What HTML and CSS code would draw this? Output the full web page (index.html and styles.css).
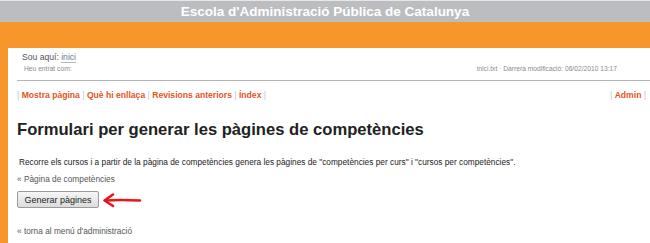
FILE: index.html
```html
<!DOCTYPE html>
<html lang="ca">
<head>
<meta charset="utf-8">
<title>Escola d'Administració Pública de Catalunya</title>
<link rel="stylesheet" href="styles.css">
</head>
<body>
<div class="site-title">Escola d'Administració Pública de Catalunya</div>
<div class="orange-bar"></div>
<div class="frame">
  <div class="content">
    <div class="meta">
      <div class="crumbs">Sou aquí: <a class="crumb-link" href="#">inici</a></div>
      <div class="meta-row">
        <span class="user">Heu entrat com:</span>
        <span class="modified">inici.txt · Darrera modificació: 06/02/2010 13:17</span>
      </div>
    </div>
    <div class="actions">
      <div class="action-group"><span class="pipe">|</span> <a href="#">Mostra pàgina</a> <span class="pipe">|</span> <a href="#">Què hi enllaça</a> <span class="pipe">|</span> <a href="#">Revisions anteriors</a> <span class="pipe">|</span> <a href="#">Índex</a> <span class="pipe">|</span></div>
      <div class="action-group"><span class="pipe">|</span> <a href="#">Admin</a> <span class="pipe">|</span></div>
    </div>
    <h1 class="page-title">Formulari per generar les pàgines de competències</h1>
    <p class="intro">Recorre els cursos i a partir de la pàgina de competències genera les pàgines de "competències per curs" i "cursos per competències".</p>
    <p class="back">« Pàgina de competències</p>
    <div class="form-row">
      <button class="btn" type="button">Generar pàgines</button>
      <svg class="arrow" width="42" height="16" viewBox="0 0 42 16">
        <path d="M40 8.5 C30 8 18 7.5 6 8.5" fill="none" stroke="#e8151b" stroke-width="2.6" stroke-linecap="round"/>
        <path d="M13 2.5 L4.5 8.5 L13 14" fill="none" stroke="#e8151b" stroke-width="2.6" stroke-linecap="round" stroke-linejoin="round"/>
      </svg>
    </div>
    <p class="back admin-back">« torna al menú d'administració</p>
  </div>
</div>
</body>
</html>
```
FILE: styles.css
```css
html, body {
  margin: 0;
  padding: 0;
  background: #fff;
}
body {
  font-family: "Liberation Sans", Arial, sans-serif;
  color: #222;
  border-top: 1px solid #e6e6e6;
}
.site-title {
  background: #bcbdc0;
  color: #fff;
  font-weight: bold;
  font-size: 13.5px;
  height: 21px;
  line-height: 22px;
  text-align: center;
}
.orange-bar {
  background: #f7962a;
  height: 26px;
}
.frame {
  border-left: 8px solid #f7962a;
  height: 200px;
}
.content {
  padding: 0 0 0 9px;
}
.meta {
  border-bottom: 1px solid #b3b3b3;
  padding: 3px 33px 6px 5px;
}
.crumbs {
  font-size: 8.6px;
  color: #555;
  line-height: 12px;
}
.crumb-link {
  color: #6a7a8c;
  text-decoration: none;
  border-bottom: 1px solid #b0b8c2;
}
.meta-row {
  display: flex;
  justify-content: space-between;
  font-size: 6.7px;
  color: #8a8a8a;
  line-height: 10px;
  margin-top: 1px;
}
.user {
  padding-left: 2px;
}
.actions {
  display: flex;
  justify-content: space-between;
  font-size: 8.6px;
  line-height: 12px;
  margin-top: 8px;
  padding-right: 4px;
}
.actions a {
  color: #e2541f;
  font-weight: bold;
  text-decoration: none;
}
.pipe {
  color: #b8c4d0;
}
.page-title {
  font-size: 16.6px;
  font-weight: bold;
  color: #222;
  margin: 18px 0 0;
  line-height: 22px;
}
.intro {
  font-size: 8.3px;
  color: #222;
  margin: 16px 0 0 2px;
  line-height: 11px;
}
.back {
  font-size: 8.3px;
  color: #555;
  margin: 6px 0 0;
  line-height: 11px;
}
.form-row {
  display: flex;
  align-items: center;
  margin-top: 6px;
}
.btn {
  font-family: "Liberation Sans", Arial, sans-serif;
  font-size: 9px;
  color: #222;
  width: 82px;
  height: 17px;
  padding: 0;
  border: 1px solid #9a9a9a;
  border-radius: 2px;
  background: linear-gradient(#f6f6f6, #dcdcdc);
}
.arrow {
  margin-left: 1px;
  margin-top: 1px;
}
.admin-back {
  margin-top: 18px;
}
```
